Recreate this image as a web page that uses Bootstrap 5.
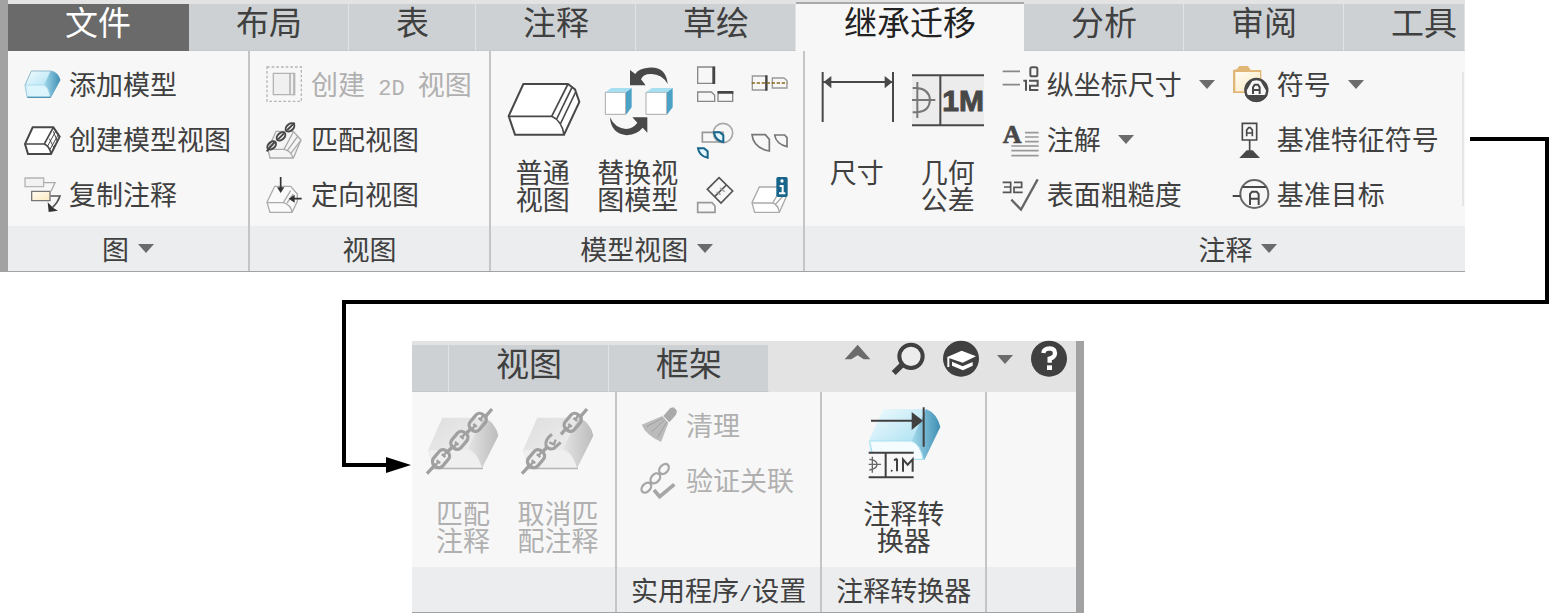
<!DOCTYPE html>
<html lang="zh-CN">
<head>
<meta charset="utf-8">
<meta name="viewport" content="width=device-width, initial-scale=1">
<title>继承迁移</title>
<link rel="stylesheet" href="https://cdn.jsdelivr.net/npm/bootstrap@5.3.0/dist/css/bootstrap.min.css">
<style>
  :root { --ink: #404040; --edge: #c3c5c7; --frame: #a2a2a2; --face: #f7f7f7; }
  body { background: #fff; color: var(--ink); font-family: "Noto Sans CJK SC", sans-serif; font-size: 27px; line-height: 27px; }
  button, a { color: inherit; text-decoration: none; }
  button { background: none; border: 0; padding: 0; white-space: nowrap; }
  button:disabled { color: #b0b0b0; }
  svg { display: block; flex: none; overflow: visible; }

  .ribbon { border-bottom: 1px solid var(--frame); background: var(--face); }
  .frame-left { border-left: 8px solid var(--frame); }
  .frame-right { border-right: 8px solid var(--frame); }
  .tab-strip { height: 51px; background: #e3e3e3; }
  .ribbon-tab { height: 47px; padding: 0 46px 0 47px; border-right: 1px solid #e0e3e5; border-bottom: 1px solid #c6c9cc; background: #cdd1d4; font-size: 33px; line-height: 34px; white-space: nowrap; }
  .ribbon-tab.file { padding: 0 58px 0 57px; border: 0; background: #6a6a6a; color: #fff; }
  .ribbon-tab.current { height: 49px; padding: 0 48px; border: 0; border-top: 2px solid #aaa; background: var(--face); color: #222; }
  .ribbon-tab.cut { padding: 0 0 0 36px; }
  .tools { gap: 18px; padding-right: 9px; }

  .panel { border-right: 2px solid var(--edge); }
  .panel-body { height: 175px; }
  .panel-name { height: 45px; background: #ecedee; gap: 9px; white-space: nowrap; }
  .stack { padding: 6px 0; }
  .inset { padding-left: 16px; padding-right: 17px; }
  .cmd { height: 55px; gap: 9px; }
  .cmd > span { padding-bottom: 3px; }
  .more { margin-left: 8px; }
  .big { width: 82px; padding-top: 15px; gap: 20px; }
  .latin { font-family: "Liberation Mono", monospace; font-size: 22px; line-height: 0; }
  .gap-wide { gap: 13px; }
  .gap-near { gap: 9px; }
  .minis { margin-left: 5px; column-gap: 18px; grid-template-columns: 36px 36px; }
  .rule { width: 2px; height: 134px; margin: 21px 0 0 14px; background: #e6e6e6; }

  .lead-out { width: 79px; margin: 137px 1px 0 5px; border-top: 4px solid #000; border-right: 4px solid #000; }
  .lead-across { height: 32px; margin: 0 1px 0 342px; border-right: 4px solid #000; border-bottom: 4px solid #000; }
  .lead-in { width: 44px; height: 163px; margin-left: 342px; border-left: 4px solid #000; border-bottom: 4px solid #000; }
  .lead-tip { margin-top: 153px; }
  .lower { margin-top: 37px; width: 672px; }
</style>
</head>
<body>
<svg width="0" height="0" class="position-absolute" aria-hidden="true">
  <defs>
    <linearGradient id="ice" x1="0" y1="0" x2="1" y2="1"><stop offset="0" stop-color="#f2fbfe"/><stop offset="1" stop-color="#8fd6ee"/></linearGradient>
    <linearGradient id="deep" x1="0" y1="0" x2="1" y2="0"><stop offset="0" stop-color="#a4d9ec"/><stop offset="1" stop-color="#3f8fb3"/></linearGradient>
    <linearGradient id="ash" x1="0" y1="0" x2="1" y2="1"><stop offset="0" stop-color="#dedede"/><stop offset="1" stop-color="#f3f3f3"/></linearGradient>
    <linearGradient id="ashside" x1="0" y1="0" x2="1" y2="0"><stop offset="0" stop-color="#e4e4e4"/><stop offset="1" stop-color="#bcbcbc"/></linearGradient>
    <linearGradient id="sand" x1="0" y1="0" x2="1" y2="1"><stop offset="0" stop-color="#fffdf5"/><stop offset="1" stop-color="#fbe8bd"/></linearGradient>
    <symbol id="caret" viewBox="0 0 16 9"><path d="M0 0H16L8 9Z" fill="#6b6b6b"/></symbol>
    <symbol id="paleblock" viewBox="0 0 216 216">
      <g stroke="none">
        <path d="M46 32H170Q205 45 212 86L165 182H18L3 130Z" fill="url(#ash)"/>
        <path d="M170 32Q205 45 214 86L165 184Q152 135 122 126Z" fill="url(#ashside)"/>
        <path d="M5 129H120Q150 140 160 182H18Z" fill="#efefef"/>
        <path d="M18 182H168V187H18Z" fill="#b5b5b5"/>
      </g>
    </symbol>
    <symbol id="link" viewBox="-36 -26 72 52">
      <rect x="-28" y="-18" width="56" height="36" rx="15" fill="none" stroke="#a0a0a0" stroke-width="10"/>
      <path d="M-26 0H-12M26 0H12M-12 -7V7M12 -7V7" fill="none" stroke="#a0a0a0" stroke-width="7"/>
    </symbol>
  </defs>
</svg>

<main>
  <div class="d-flex">
    <section class="ribbon frame-left flex-grow-1 overflow-hidden" aria-label="功能区">
      <nav class="tab-strip d-flex align-items-end">
        <a href="#" class="ribbon-tab file">文件</a>
        <a href="#" class="ribbon-tab">布局</a>
        <a href="#" class="ribbon-tab">表</a>
        <a href="#" class="ribbon-tab">注释</a>
        <a href="#" class="ribbon-tab">草绘</a>
        <a href="#" class="ribbon-tab current" aria-current="page">继承迁移</a>
        <a href="#" class="ribbon-tab">分析</a>
        <a href="#" class="ribbon-tab">审阅</a>
        <a href="#" class="ribbon-tab flex-grow-1 pe-0">工具</a>
      </nav>
      <div class="d-flex">
        <div class="panel">
          <div class="panel-body stack inset">
            <button class="cmd d-flex align-items-center">
              <svg width="36" height="36" viewBox="72 199 108 108"><path d="M94 211H152Q174 214 180 238L152 290H82L75 253Z" fill="url(#ice)" stroke="#8fb9c9" stroke-width="3"/><path d="M152 211Q174 214 181 238L152 291Q148 262 132 252Z" fill="url(#deep)"/><path d="M76 253H132Q146 260 150 289H82Z" fill="#dcf4fc" stroke="#9fd3e6" stroke-width="2"/><path d="M82 290H152" stroke="#4f95b3" stroke-width="4"/></svg>
              <span>添加模型</span></button>
            <button class="cmd d-flex align-items-center">
              <svg width="36" height="36" viewBox="72 364 108 108" fill="none" stroke="#484848" stroke-width="6"><path d="M98 380H160L179 408L153 460H84L75 430Z" fill="#fff"/><path d="M75 430H133L160 380M133 430Q150 438 153 460" stroke-width="5"/><path d="M143 436L168 390M150 446L175 402M160 392L172 422M148 414L162 442" stroke-width="3"/></svg>
              <span>创建模型视图</span></button>
            <button class="cmd d-flex align-items-center">
              <svg width="36" height="36" viewBox="72 529 108 108" fill="none" stroke-width="4"><path d="M132 546H165L153 572" stroke="#aaa"/><path d="M75 532H131V558H75Z" fill="#f2f2f2" stroke="#b5b5b5"/><path d="M95 572H150V600H95Z" fill="url(#sand)" stroke="#777"/><path d="M152 586H180Q173 606 158 620" stroke="#555" stroke-width="5"/><path d="M143 605L146 634L174 630L160 622Z" fill="#333"/></svg>
              <span>复制注释</span></button>
          </div>
          <button class="panel-name w-100 d-flex align-items-center justify-content-center">图<svg width="16" height="9"><use href="#caret"/></svg></button>
        </div>

        <div class="panel">
          <div class="panel-body stack inset">
            <button class="cmd d-flex align-items-center" disabled>
              <svg width="36" height="36" viewBox="798 199 108 108" fill="none" stroke="#b5b5b5"><path d="M801 199H904V302H801Z" stroke-width="4" stroke-dasharray="8 6"/><path d="M820 218H884V282H820Z" fill="#f0f0f0" stroke-width="4"/><path d="M870 220V281M882 218V284" stroke-width="5"/></svg>
              <span>创建<span class="latin">&nbsp;2D&nbsp;</span>视图</span></button>
            <button class="cmd d-flex align-items-center">
              <svg width="36" height="36" viewBox="798 364 108 108" fill="none" stroke-width="4"><path d="M828 392H880L903 418L880 472H810L804 446Z" fill="#f4f4f4" stroke="#aaa"/><path d="M806 446H852L880 394M852 446Q872 450 878 470M862 450L893 407M872 459L902 420" stroke="#aaa"/><g stroke="#484848" stroke-width="6"><ellipse cx="870" cy="380" rx="15" ry="10" transform="rotate(-43 870 380)"/><ellipse cx="843" cy="407" rx="15" ry="10" transform="rotate(-43 843 407)"/><ellipse cx="815" cy="434" rx="15" ry="10" transform="rotate(-43 815 434)"/><path d="M800 452L824 424M834 416L852 398M862 388L884 366"/></g></svg>
              <span>匹配视图</span></button>
            <button class="cmd d-flex align-items-center">
              <svg width="36" height="36" viewBox="798 529 108 108" fill="none" stroke-width="4"><path d="M824 557H872L892 580V602L876 635H810L801 605Z" fill="#fafafa" stroke="#aaa"/><path d="M802 606H850L872 570M850 606Q872 612 876 634M861 607L880 580" stroke="#aaa"/><path d="M842 529V562M905 594H878" stroke="#333" stroke-width="5"/><path d="M831 560H853L842 577ZM884 582V606L866 594Z" fill="#333"/></svg>
              <span>定向视图</span></button>
          </div>
          <div class="panel-name d-flex align-items-center justify-content-center">视图</div>
        </div>

        <div class="panel">
          <div class="panel-body d-flex align-items-start gap-wide" style="padding:0 16px 0 11px">
            <button class="big d-flex flex-column align-items-center">
              <svg width="72" height="72" viewBox="321 198 216 216" fill="none" stroke="#484848" stroke-width="6"><path d="M370 252H504L525 268L538 306L492 404H345L326 348Z" fill="#fff"/><path d="M326 349H455L504 252M455 349Q485 362 492 404" stroke-width="5"/><path d="M470 357L516 262M481 372L527 276" stroke-width="5"/></svg>
              <span>普通<br>视图</span></button>
            <button class="big d-flex flex-column align-items-center">
              <svg width="72" height="72" viewBox="606 198 216 216"><path d="M803 252Q798 198 745 203Q715 205 706 222L690 210V256H737L723 238Q730 221 754 222Q786 222 803 252Z" fill="#484848"/><path d="M630 352Q632 400 680 406Q712 403 728 383L742 398V352H697L712 368Q700 386 678 387Q644 384 630 352Z" fill="#484848"/><g stroke="#aaa" stroke-width="3"><path d="M616 277H677V343H616ZM738 277H800V343H738Z" fill="#fff"/></g><path d="M616 277L634 264H694L677 277ZM738 277L756 264H817L800 277Z" fill="#a6def2"/><path d="M678 277L695 264V322L678 344ZM801 277L818 264V322L801 344Z" fill="#4aa3c7"/></svg>
              <span>替换视<br>图模型</span></button>
            <div class="minis stack d-grid">
              <button class="cmd d-flex align-items-center" aria-label="投影视图"><svg width="36" height="36" viewBox="891 199 108 108" fill="none" stroke="#888" stroke-width="4"><path d="M893 199H944V248H893ZM893 274H934L944 284V302H893ZM954 274H998V302H954Z"/><path d="M941 198V250M953 275H1000" stroke="#444" stroke-width="8"/></svg></button>
              <button class="cmd d-flex align-items-center" aria-label="对齐视图"><svg width="36" height="36" viewBox="1053 199 108 108" fill="none" stroke="#999" stroke-width="4"><path d="M1057 226H1100V268H1057ZM1117 232H1152L1161 240V262H1117Z"/><path d="M1099 224V270" stroke="#444" stroke-width="7"/><path d="M1055 247H1162" stroke="#8a6a1c" stroke-width="5" stroke-dasharray="10 5"/></svg></button>
              <button class="cmd d-flex align-items-center" aria-label="详细视图"><svg width="36" height="36" viewBox="891 364 108 108" fill="none" stroke-width="5"><circle cx="969" cy="397" r="29" stroke="#aaa"/><path d="M907 395H969V424H907Z" stroke="#999"/><path d="M942 395H959L970 404V424Q946 420 942 395ZM894 443H912L923 452V471Q898 466 894 443Z" fill="#e3f5fc" stroke="#17658a" stroke-width="6"/></svg></button>
              <button class="cmd d-flex align-items-center" aria-label="局部视图"><svg width="36" height="36" viewBox="1053 364 108 108" fill="none" stroke="#777" stroke-width="5"><path d="M1056 402H1096L1108 416V451Q1060 442 1056 402ZM1124 403H1154L1161 411V438Q1128 430 1124 403Z"/></svg></button>
              <button class="cmd d-flex align-items-center" aria-label="辅助视图"><svg width="36" height="36" viewBox="891 529 108 108" fill="none" stroke="#555" stroke-width="5"><path d="M957 531L998 571L963 607L922 566Z"/><path d="M944 588L979 553"/><path d="M950 574L962 582M960 562L974 573" stroke="#999" stroke-width="4"/><path d="M893 606H936L945 616V635H893Z" stroke="#999"/></svg></button>
              <button class="cmd d-flex align-items-center" aria-label="视图信息"><svg width="36" height="36" viewBox="1053 529 108 108" fill="none" stroke="#aaa" stroke-width="4"><path d="M1078 559H1132L1158 590L1138 635H1064L1056 606Z" fill="#fff"/><path d="M1056 607H1118L1140 570M1118 607Q1134 612 1138 634M1127 610L1155 580"/><rect x="1129" y="529" width="34" height="60" rx="5" fill="#17658a" stroke="none"/><path d="M1139 556H1148V578M1137 578H1156" stroke="#fff" stroke-width="6"/><circle cx="1146" cy="541" r="5" fill="#fff" stroke="none"/></svg></button>
            </div>
          </div>
          <button class="panel-name w-100 d-flex align-items-center justify-content-center">模型视图<svg width="16" height="9"><use href="#caret"/></svg></button>
        </div>

        <div class="flex-grow-1">
          <div class="panel-body d-flex align-items-start gap-near" style="padding-left:11px">
            <button class="big d-flex flex-column align-items-center">
              <svg width="72" height="72" viewBox="63 198 216 216" fill="none" stroke="#484848" stroke-width="6"><path d="M68 216V366M279 216V366M70 246H277"/><path d="M71 246L94 228V265ZM277 246L254 228V265Z" fill="#484848" stroke="none"/></svg>
              <span>尺寸</span></button>
            <button class="big d-flex flex-column align-items-center">
              <svg width="72" height="72" viewBox="336 198 216 216" fill="none" stroke="#484848" stroke-width="6"><path d="M336 226H552V376H336Z" fill="#ececec" stroke="none"/><path d="M336 226H552M336 376H552M421 226V376"/><path d="M338 264H352Q388 268 390 300Q388 334 352 337H338M352 246V354M336 300H406" stroke="#777"/><text x="427" y="334" font-family="Liberation Sans, sans-serif" font-weight="700" font-size="90" fill="#484848" stroke="#484848" stroke-width="3">1M</text></svg>
              <span>几何<br>公差</span></button>
            <div class="stack ms-1">
              <button class="cmd d-flex align-items-center">
                <svg width="36" height="36" viewBox="606 199 108 108" fill="none" stroke="#888" stroke-width="5"><path d="M608 212H660M608 252H660"/><path d="M670 240H678V270M687 240H713V255H690V268H715" stroke="#555" stroke-width="6"/><rect x="691" y="200" width="21" height="27" rx="5" stroke="#555" stroke-width="6"/></svg>
                <span>纵坐标尺寸</span><svg class="more" width="16" height="9"><use href="#caret"/></svg></button>
              <button class="cmd d-flex align-items-center">
                <svg width="36" height="36" viewBox="606 364 108 108" stroke="#999" stroke-width="5"><text x="608" y="427" font-family="Liberation Serif, serif" font-weight="700" font-size="78" fill="#484848" stroke="#484848" stroke-width="2">A</text><path d="M675 396H716M675 409H716M675 423H716M634 436H716M634 450H716M634 465H716"/></svg>
                <span>注解</span><svg class="more" width="16" height="9"><use href="#caret"/></svg></button>
              <button class="cmd d-flex align-items-center">
                <svg width="36" height="36" viewBox="606 529 108 108" fill="none" stroke="#666" stroke-width="7"><path d="M608 545H632V575H608M612 559H632M642 545H665V560H642V575H668" stroke="#555" stroke-width="5"/><path d="M634 597L663 627L713 536"/></svg>
                <span>表面粗糙度</span></button>
            </div>
            <div class="stack more">
              <button class="cmd d-flex align-items-center">
                <svg width="36" height="36" viewBox="246 199 108 108"><path d="M249 277V208L260 206L268 196H294L302 208H334V277Z" fill="#e0b777"/><path d="M256 214H330V272H256Z" fill="url(#sand)"/><circle cx="319" cy="268" r="33" fill="#f7f7f7" stroke="#484848" stroke-width="7"/><path d="M285 283H353Q343 303 319 304Q295 303 285 283ZM286 276L312 232L288 250ZM352 276L326 232L350 250Z" fill="#484848"/><path d="M309 280V260L314 252H324L329 260V280M309 268H329" fill="none" stroke="#484848" stroke-width="6"/></svg>
                <span>符号</span><svg class="more" width="16" height="9"><use href="#caret"/></svg></button>
              <button class="cmd d-flex align-items-center">
                <svg width="36" height="36" viewBox="246 364 108 108" fill="none" stroke="#484848" stroke-width="5"><path d="M277 368H320V418H277ZM299 418V450"/><path d="M290 407V388L296 381H301L307 388V407M290 397H307"/><path d="M268 472L290 449H308L330 472Z" fill="#484848" stroke="none"/></svg>
                <span>基准特征符号</span></button>
              <button class="cmd d-flex align-items-center">
                <svg width="36" height="36" viewBox="246 529 108 108" fill="none" stroke="#484848" stroke-width="6"><circle cx="313" cy="580" r="42" stroke="#666"/><path d="M248 586H272M278 559H348M300 613V580L306 573H320L326 580V613M300 594H326"/></svg>
                <span>基准目标</span></button>
            </div>
            <div class="rule"></div>
          </div>
          <button class="panel-name w-100 d-flex align-items-center justify-content-center" style="padding-left:206px">注释<svg width="16" height="9"><use href="#caret"/></svg></button>
        </div>
      </div>
    </section>
    <div class="lead-out flex-shrink-0"></div>
  </div>

  <div class="lead-across"></div>

  <div class="d-flex align-items-start">
    <div class="lead-in flex-shrink-0"></div>
    <svg class="lead-tip" width="26" height="16" viewBox="0 0 26 16"><path d="M0 0L25 8L0 16Z"/></svg>
    <section class="ribbon frame-right lower flex-shrink-0" aria-label="功能区（续）">
      <nav class="tab-strip d-flex align-items-end">
        <span class="ribbon-tab cut"></span>
        <a href="#" class="ribbon-tab">视图</a>
        <a href="#" class="ribbon-tab">框架</a>
        <div class="tools d-flex align-items-center align-self-start ms-auto">
          <button aria-label="最小化功能区"><svg width="28" height="36" viewBox="375 33 84 108"><path d="M374 88L413 44L451 88H431L413 76L394 88Z" fill="#6b6b6b"/></svg></button>
          <button aria-label="搜索"><svg width="34" height="36" viewBox="513 33 102 108" fill="none" stroke="#404040"><circle cx="573" cy="79" r="35" fill="#ececec" stroke-width="12"/><path d="M548 103L521 129" stroke-width="17"/></svg></button>
          <button aria-label="学习"><svg width="36" height="36" viewBox="673 33 108 108"><circle cx="727" cy="86" r="54" fill="#404040"/><path d="M684 82L729 62L772 79L732 98Z" fill="#fff"/><path d="M700 95L732 109L762 96V107L733 121L700 107Z" fill="#fff"/><path d="M689 82V111" stroke="#fff" stroke-width="6"/></svg></button>
          <button aria-label="更多"><svg width="16" height="9"><use href="#caret"/></svg></button>
          <button aria-label="帮助"><svg width="36" height="36" viewBox="931 33 108 108"><circle cx="985" cy="86" r="54" fill="#404040"/><path d="M968 69Q970 55 987 55Q1003 56 1003 70Q1002 82 987 86V98" fill="none" stroke="#fff" stroke-width="13"/><path d="M979 106H994V120H979Z" fill="#fff"/></svg></button>
        </div>
      </nav>
      <div class="d-flex">
        <div class="panel">
          <div class="panel-body d-flex align-items-start gap-wide" style="padding:0 16px 0 10px">
            <button class="big d-flex flex-column align-items-center" disabled>
              <svg width="72" height="72" viewBox="0 0 216 216" fill="none" stroke="#a0a0a0" stroke-width="10"><use href="#paleblock" width="216" height="216"/><path d="M0 200L22 176M176 28L195 6M64 132L76 120M119 78L131 66"/><use href="#link" x="-36" y="-26" width="72" height="52" transform="translate(42 155) rotate(-50)"/><use href="#link" x="-36" y="-26" width="72" height="52" transform="translate(97 100) rotate(-50)"/><use href="#link" x="-36" y="-26" width="72" height="52" transform="translate(152 46) rotate(-50)"/></svg>
              <span>匹配<br>注释</span></button>
            <button class="big d-flex flex-column align-items-center" disabled>
              <svg width="72" height="72" viewBox="0 0 216 216" fill="none" stroke="#a0a0a0" stroke-width="10"><use href="#paleblock" width="216" height="216"/><path d="M0 200L22 176M176 28L195 6M64 132L76 120M117 82L131 66"/><use href="#link" x="-36" y="-26" width="72" height="52" transform="translate(42 155) rotate(-50)"/><use href="#link" x="-36" y="-26" width="72" height="52" transform="translate(152 46) rotate(-50)"/><path d="M90 82Q68 98 72 116Q80 130 96 124L116 106" stroke-width="9"/><path d="M82 106L96 112L101 98" stroke-width="7"/></svg>
              <span>取消匹<br>配注释</span></button>
          </div>
          <div class="panel-name"></div>
        </div>
        <div class="panel">
          <div class="panel-body stack" style="padding-left:24px">
            <button class="cmd d-flex align-items-center" disabled>
              <svg width="36" height="36" viewBox="936 352 108 108" fill="#aaa"><path d="M1024 352L1034 350L1044 360L1041 372L1021 395L1003 376Z"/><path d="M938 402L1000 376L1018 397L996 454Q950 432 938 402Z" fill="#bbb"/><path d="M952 408L1002 382M968 424L1008 386M986 440L1014 393" stroke="#a0a0a0" stroke-width="3"/></svg>
              <span>清理</span></button>
            <button class="cmd d-flex align-items-center" disabled>
              <svg width="36" height="36" viewBox="936 517 108 108" fill="none" stroke="#a6a6a6" stroke-width="7"><ellipse cx="1005" cy="535" rx="17" ry="12" transform="rotate(-48 1005 535)"/><ellipse cx="979" cy="563" rx="17" ry="12" transform="rotate(-48 979 563)"/><ellipse cx="952" cy="591" rx="17" ry="12" transform="rotate(-48 952 591)"/><path d="M975 598L992 618L1036 581" stroke-width="11"/></svg>
              <span>验证关联</span></button>
          </div>
          <div class="panel-name d-flex align-items-center justify-content-center" style="padding:0 14px"><span>实用程序<span class="latin">/</span>设置</span></div>
        </div>
        <div class="panel">
          <div class="panel-body d-flex align-items-start justify-content-center">
            <button class="big d-flex flex-column align-items-center">
              <svg width="72" height="72" viewBox="441 231 216 216" fill="none" stroke="#404040" stroke-width="6"><path d="M487 237H615Q648 250 657 291L610 389H452L443 333Z" fill="url(#ice)" stroke="none"/><path d="M615 237Q648 250 658 291L610 390Q598 342 572 333Z" fill="url(#deep)" stroke="none"/><path d="M446 333H572Q600 345 606 388H458Z" fill="#f4fcff" stroke="#a8deef" stroke-width="3"/><path d="M443 368H578V442H443Z" fill="#f7f7f7" stroke="none"/><path d="M443 368H578M443 442H578M494 368V442M450 272H580M608 232V350"/><path d="M572 246L606 272L572 300Z" fill="#404040" stroke="none"/><path d="M445 388Q468 390 468 403Q468 417 445 420M454 380V428M443 403H480" stroke="#666" stroke-width="4"/><path d="M528 386V424M519 391L528 386M546 425V388L560 404L575 388V425"/><circle cx="512" cy="422" r="3" fill="#404040" stroke="none"/></svg>
              <span>注释转<br>换器</span></button>
          </div>
          <div class="panel-name d-flex align-items-center justify-content-center" style="padding:0 14px">注释转换器</div>
        </div>
        <div class="flex-grow-1">
          <div class="panel-body"></div>
          <div class="panel-name"></div>
        </div>
      </div>
    </section>
  </div>
</main>
<script src="https://cdn.jsdelivr.net/npm/bootstrap@5.3.0/dist/js/bootstrap.bundle.min.js"></script>
</body>
</html>
